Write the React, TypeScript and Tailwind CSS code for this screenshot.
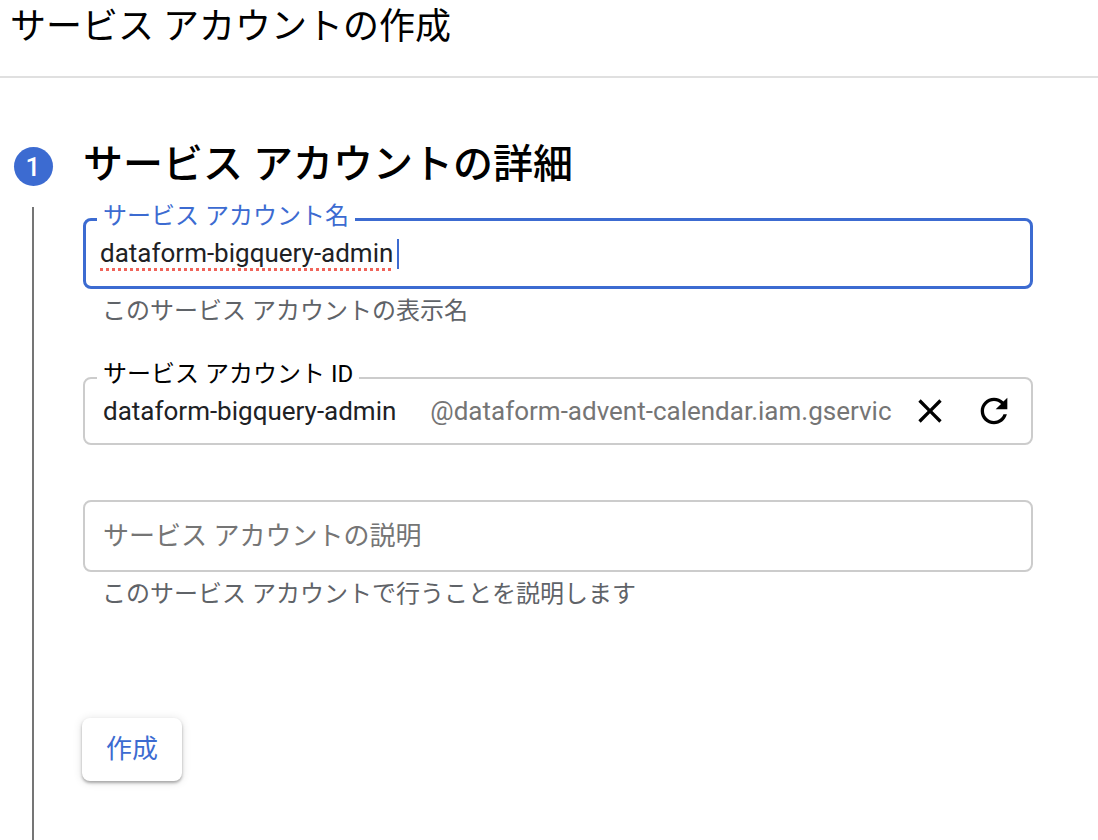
import { useState } from 'react';

const font = { fontFamily: "Roboto, 'Noto Sans CJK JP', sans-serif" };

function CloseIcon() {
  return (
    <svg viewBox="0 0 24 24" className="w-[40px] h-[40px]" fill="#000">
      <path d="M19 6.41L17.59 5 12 10.59 6.41 5 5 6.41 10.59 12 5 17.59 6.41 19 12 13.41 17.59 19 19 17.59 13.41 12z" />
    </svg>
  );
}

function RefreshIcon() {
  return (
    <svg viewBox="0 0 24 24" className="w-[40px] h-[40px]" fill="#000">
      <path d="M17.65 6.35C16.2 4.9 14.21 4 12 4c-4.42 0-7.99 3.58-7.99 8s3.57 8 7.99 8c3.73 0 6.84-2.55 7.73-6h-2.08c-.82 2.33-3.04 4-5.65 4-3.31 0-6-2.69-6-6s2.69-6 6-6c1.66 0 3.14.69 4.22 1.78L13 11h7V4l-2.35 2.35z" />
    </svg>
  );
}

export default function App() {
  const [name] = useState('dataform-bigquery-admin');

  return (
    <div className="min-h-screen flex flex-col bg-white text-[#202124]" style={font}>
      {/* ヘッダー */}
      <div className="h-[78px] border-b-2 border-[#e0e0e0] pl-[10px] pt-[5px]">
        <h1 className="text-[36px] leading-[44px] text-black">サービス アカウントの作成</h1>
      </div>

      {/* ステップ 1 */}
      <div className="flex flex-1 mt-[63px]">
        <div className="w-[66px] flex flex-col items-center">
          <div className="mt-[6px] w-[39px] h-[39px] rounded-full bg-[#3c6bd1] flex items-center justify-center text-white text-[26px] leading-none font-medium">
            1
          </div>
          <div className="mt-[21px] w-[2px] flex-1 bg-[#757575]" />
        </div>

        <div className="ml-[17px] w-[950px] flex flex-col items-start">
          <h2 className="text-[40px] leading-[48px] font-[450] text-black">サービス アカウントの詳細</h2>

          {/* サービス アカウント名 */}
          <div className="relative mt-[29px] w-full h-[71px] border-[3px] border-[#3c6bd1] rounded-lg flex items-center px-[14px]">
            <span className="absolute left-[11px] -top-[19px] px-[6px] bg-white text-[#3c6bd1] text-[24px] leading-[28px]">
              サービス アカウント名
            </span>
            <span className="text-[26px] underline decoration-dotted decoration-[#f0645a] decoration-[3px] underline-offset-[6px]">
              {name}
            </span>
            <span className="ml-[4px] w-[2px] h-[30px] bg-[#3c6bd1]" />
          </div>
          <p className="mt-[6px] ml-[19px] text-[24px] leading-[32px] text-[#5f6368]">このサービス アカウントの表示名</p>

          {/* サービス アカウント ID */}
          <div className="relative mt-[50px] w-full h-[68px] border-2 border-[#cccccc] rounded-lg flex items-center pl-[18px] pr-[17px]">
            <span className="absolute left-[12px] -top-[19px] px-[6px] bg-white text-black text-[24px] leading-[28px]">
              サービス アカウント ID
            </span>
            <span className="text-[26px]">dataform-bigquery-admin</span>
            <span className="ml-[34px] shrink-0 whitespace-nowrap text-[26px] text-[#757575]">
              @dataform-advent-calendar.iam.gservic
            </span>
            <button className="ml-auto"><CloseIcon /></button>
            <button className="ml-[24px]"><RefreshIcon /></button>
          </div>

          {/* 説明 */}
          <div className="mt-[55px] w-full h-[72px] border-2 border-[#cccccc] rounded-lg flex items-center pl-[18px]">
            <span className="text-[26px] text-[#757575]">サービス アカウントの説明</span>
          </div>
          <p className="mt-[6px] ml-[19px] text-[24px] leading-[32px] text-[#5f6368]">このサービス アカウントで行うことを説明します</p>

          <button className="mt-[108px] -ml-px w-[100px] h-[63px] rounded-lg bg-white text-[#3c6bd1] text-[26px] shadow-[0_2px_3px_rgba(0,0,0,0.3),0_1px_8px_1px_rgba(0,0,0,0.1)]">
            作成
          </button>
        </div>
      </div>
    </div>
  );
}
